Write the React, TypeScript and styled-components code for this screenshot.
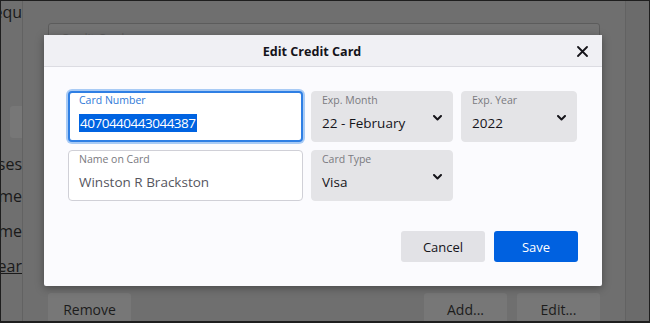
import styled, { createGlobalStyle } from "styled-components";

const GlobalStyle = createGlobalStyle`
  * { box-sizing: border-box; }
  html, body { margin: 0; padding: 0; background: #1c1c1c; }
  body { font-family: "Open Sans", "Noto Sans", sans-serif; }
`;

const Frame = styled.div`
  position: relative;
  width: 650px;
  height: 323px;
  overflow: hidden;
  background: #6f6f6f;
  border: 1px solid #1e1e1e;
  border-bottom-width: 2px;
  display: flex;
`;

const SideColumn = styled.div`
  width: 22px;
  flex: none;
  overflow: hidden;
  display: flex;
  flex-direction: column;
  align-items: flex-end;
  border-right: 1px solid #626262;
  color: #1a1a1a;
  font-size: 16px;
  white-space: nowrap;
`;

const SideLine = styled.div<{ $top: number; $underline?: boolean }>`
  margin-top: ${(p) => p.$top}px;
  line-height: 20px;
  text-decoration: ${(p) => (p.$underline ? "underline" : "none")};
`;

const SideButton = styled.div`
  margin-top: 84px;
  width: 12px;
  height: 32px;
  align-self: flex-end;
  background: #777777;
  border-radius: 3px 0 0 3px;
`;

const Main = styled.div`
  flex: 1;
  display: flex;
  flex-direction: column;
  padding: 22px 25px 0 25px;
  border-right: 1px solid #626262;
`;

const GhostInput = styled.div`
  height: 40px;
  border: 1px solid #5c5c5c;
  border-radius: 3px;
  background: #737373;
  padding: 6px 12px;
  font-size: 12px;
  color: #606060;
`;

const GhostButtons = styled.div`
  margin-top: auto;
  display: flex;
  gap: 10px;
  height: 28px;
`;

const GhostButton = styled.div<{ $push?: boolean }>`
  width: 83px;
  margin-left: ${(p) => (p.$push ? "auto" : "0")};
  background: #777777;
  border-radius: 3px 3px 0 0;
  color: #1c1c1c;
  font-size: 14px;
  display: flex;
  justify-content: center;
  padding-top: 7px;
`;

const RightStrip = styled.div`
  width: 23px;
  flex: none;
  background: #6b6b6b;
`;

const Dialog = styled.div`
  position: absolute;
  left: 43px;
  top: 34px;
  width: 558px;
  height: 251px;
  background: #fbfbfe;
  border-radius: 2px;
  box-shadow: 0 2px 8px rgba(0, 0, 0, 0.35);
  display: flex;
  flex-direction: column;
`;

const DialogHeader = styled.div`
  height: 32px;
  flex: none;
  background: #f0f0f4;
  border-bottom: 1px solid #dcdce2;
  display: flex;
  align-items: center;
  padding: 1px 14px 0 0;
`;

const Title = styled.div`
  flex: 1;
  text-align: center;
  font-size: 12.6px;
  font-weight: 700;
  color: #15141a;
  margin-right: -4px;
`;

const CloseButton = styled.button`
  width: 12px;
  height: 12px;
  padding: 0;
  border: none;
  background: transparent;
  display: flex;
  align-items: center;
  justify-content: center;
`;

const DialogBody = styled.div`
  flex: 1;
  padding: 24px 24px 0 24px;
  display: flex;
  flex-direction: column;
`;

const FieldGrid = styled.div`
  display: grid;
  grid-template-columns: 235px 142px 116px;
  grid-template-rows: 51px 51px;
  column-gap: 8px;
  row-gap: 8px;
`;

const Field = styled.div<{ $variant: "focus" | "text" | "select" }>`
  position: relative;
  border-radius: 4px;
  padding: ${(p) => (p.$variant === "focus" ? "0 9px" : "1px 10px")};
  background: ${(p) => (p.$variant === "select" ? "#e4e4e7" : "#ffffff")};
  border: ${(p) =>
    p.$variant === "focus"
      ? "2px solid #2f7fe4"
      : p.$variant === "text"
      ? "1px solid #d0d0d7"
      : "1px solid #e4e4e7"};
  box-shadow: ${(p) =>
    p.$variant === "focus" ? "0 0 0 2px #a9cbf5" : "none"};
  display: flex;
  flex-direction: column;
`;

const Label = styled.div<{ $active?: boolean }>`
  font-size: 10.5px;
  line-height: 14px;
  color: ${(p) => (p.$active ? "#2f7ad8" : "#7a7a80")};
`;

const Value = styled.div<{ $tone: "dark" | "muted" }>`
  margin-top: 7px;
  font-size: 13.5px;
  line-height: 18px;
  color: ${(p) => (p.$tone === "dark" ? "#15141a" : "#56565e")};
  white-space: nowrap;
`;

const Selected = styled.span`
  background: #0063e1;
  color: #ffffff;
  padding: 0 1px;
  letter-spacing: -0.5px;
`;

const Chevron = styled.svg`
  position: absolute;
  right: 10px;
  top: 23px;
`;

const Actions = styled.div`
  margin-top: 30px;
  display: flex;
  justify-content: flex-end;
  gap: 9px;
`;

const ActionButton = styled.button<{ $primary?: boolean }>`
  width: 84px;
  height: 31px;
  border: none;
  border-radius: 3px;
  font-family: inherit;
  font-size: 13px;
  background: ${(p) => (p.$primary ? "#0061e0" : "#e2e2e6")};
  color: ${(p) => (p.$primary ? "#ffffff" : "#15141a")};
`;

const ChevronIcon = () => (
  <Chevron width="9" height="6" viewBox="0 0 9 6">
    <polyline
      points="1,1 4.5,4.5 8,1"
      fill="none"
      stroke="#15141a"
      strokeWidth="2"
      strokeLinecap="round"
      strokeLinejoin="round"
    />
  </Chevron>
);

export default function App() {
  return (
    <>
      <GlobalStyle />
      <Frame>
        <SideColumn>
          <SideLine $top={1}>Always requ</SideLine>
          <SideButton />
          <SideLine $top={16}>Firefox uses</SideLine>
          <SideLine $top={12}>home</SideLine>
          <SideLine $top={15}>home</SideLine>
          <SideLine $top={15} $underline>
            Clear
          </SideLine>
        </SideColumn>
        <Main>
          <GhostInput>Credit Cards</GhostInput>
          <GhostButtons>
            <GhostButton>Remove</GhostButton>
            <GhostButton $push>Add...</GhostButton>
            <GhostButton>Edit...</GhostButton>
          </GhostButtons>
        </Main>
        <RightStrip />

        <Dialog>
          <DialogHeader>
            <Title>Edit Credit Card</Title>
            <CloseButton aria-label="Close">
              <svg width="11" height="11" viewBox="0 0 11 11">
                <path
                  d="M1 1 L10 10 M10 1 L1 10"
                  stroke="#15141a"
                  strokeWidth="1.8"
                  strokeLinecap="round"
                />
              </svg>
            </CloseButton>
          </DialogHeader>
          <DialogBody>
            <FieldGrid>
              <Field $variant="focus">
                <Label $active>Card Number</Label>
                <Value $tone="dark">
                  <Selected>4070440443044387</Selected>
                </Value>
              </Field>
              <Field $variant="select">
                <Label>Exp. Month</Label>
                <Value $tone="dark">22 - February</Value>
                <ChevronIcon />
              </Field>
              <Field $variant="select">
                <Label>Exp. Year</Label>
                <Value $tone="dark">2022</Value>
                <ChevronIcon />
              </Field>
              <Field $variant="text">
                <Label>Name on Card</Label>
                <Value $tone="muted">Winston R Brackston</Value>
              </Field>
              <Field $variant="select">
                <Label>Card Type</Label>
                <Value $tone="dark">Visa</Value>
                <ChevronIcon />
              </Field>
            </FieldGrid>
            <Actions>
              <ActionButton>Cancel</ActionButton>
              <ActionButton $primary>Save</ActionButton>
            </Actions>
          </DialogBody>
        </Dialog>
      </Frame>
    </>
  );
}
